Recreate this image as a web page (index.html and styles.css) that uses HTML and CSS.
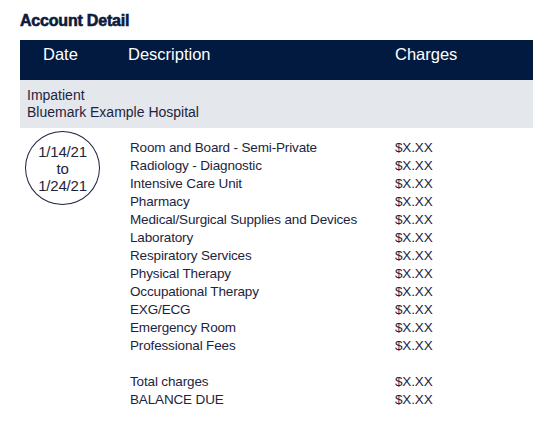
FILE: index.html
```html
<!DOCTYPE html>
<html>
<head>
<meta charset="utf-8">
<link rel="stylesheet" href="styles.css">
</head>
<body>
<div class="page">
  <h1 class="title">Account Detail</h1>
  <div class="header">
    <div class="col-date">Date</div>
    <div class="col-desc">Description</div>
    <div class="col-charge">Charges</div>
  </div>
  <div class="facility">
    <div>Impatient</div>
    <div>Bluemark Example Hospital</div>
  </div>
  <div class="body">
    <div class="col-date">
      <div class="dates">
        <span>1/14/21</span>
        <span>to</span>
        <span>1/24/21</span>
      </div>
    </div>
    <div class="lines">
      <div class="row"><span class="desc">Room and Board - Semi-Private</span><span class="amt">$X.XX</span></div>
      <div class="row"><span class="desc">Radiology - Diagnostic</span><span class="amt">$X.XX</span></div>
      <div class="row"><span class="desc">Intensive Care Unit</span><span class="amt">$X.XX</span></div>
      <div class="row"><span class="desc">Pharmacy</span><span class="amt">$X.XX</span></div>
      <div class="row"><span class="desc">Medical/Surgical Supplies and Devices</span><span class="amt">$X.XX</span></div>
      <div class="row"><span class="desc">Laboratory</span><span class="amt">$X.XX</span></div>
      <div class="row"><span class="desc">Respiratory Services</span><span class="amt">$X.XX</span></div>
      <div class="row"><span class="desc">Physical Therapy</span><span class="amt">$X.XX</span></div>
      <div class="row"><span class="desc">Occupational Therapy</span><span class="amt">$X.XX</span></div>
      <div class="row"><span class="desc">EXG/ECG</span><span class="amt">$X.XX</span></div>
      <div class="row"><span class="desc">Emergency Room</span><span class="amt">$X.XX</span></div>
      <div class="row"><span class="desc">Professional Fees</span><span class="amt">$X.XX</span></div>
      <div class="row gap"><span class="desc">Total charges</span><span class="amt">$X.XX</span></div>
      <div class="row"><span class="desc">BALANCE DUE</span><span class="amt">$X.XX</span></div>
    </div>
  </div>
</div>
</body>
</html>
```
FILE: styles.css
```css
html, body {
  margin: 0;
  padding: 0;
  background: #ffffff;
}
body {
  font-family: "Liberation Sans", Arial, sans-serif;
  color: #1c2540;
}
.page {
  width: 513px;
  padding: 11px 0 0 20px;
}
.title {
  margin: 0;
  font-size: 16px;
  font-weight: bold;
  color: #0d1a3c;
  line-height: 20px;
  letter-spacing: -0.2px;
  -webkit-text-stroke: 0.6px #0d1a3c;
  height: 29px;
}
.header {
  display: flex;
  align-items: center;
  height: 40px;
  background: #021a40;
  color: #ffffff;
  font-size: 16.5px;
  padding-bottom: 12px;
  box-sizing: border-box;
}
.header .col-date {
  width: 108px;
  padding-left: 23px;
  box-sizing: border-box;
}
.header .col-desc {
  width: 267px;
}
.facility {
  background: #e4e7ec;
  height: 48px;
  box-sizing: border-box;
  padding: 7px 0 0 7px;
  font-size: 14px;
  line-height: 17px;
}
.body {
  display: flex;
  padding-top: 11px;
}
.body .col-date {
  width: 110px;
  padding-left: 5px;
  box-sizing: border-box;
}
.dates {
  width: 75px;
  height: 74px;
  border: 1px solid #1c2540;
  border-radius: 50%;
  box-sizing: border-box;
  display: flex;
  flex-direction: column;
  align-items: center;
  justify-content: center;
  font-size: 15px;
  line-height: 17px;
  letter-spacing: -0.2px;
  margin-top: -8px;
}
.lines {
  display: flex;
  flex-direction: column;
}
.row {
  display: flex;
  height: 18px;
  line-height: 18px;
  font-size: 13.5px;
  letter-spacing: -0.15px;
}
.row .desc {
  width: 265px;
}
.row.gap {
  margin-top: 18px;
}
```
